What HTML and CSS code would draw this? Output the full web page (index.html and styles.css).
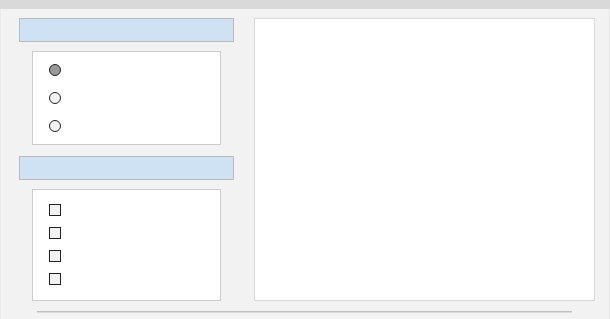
FILE: index.html
```html
<!DOCTYPE html>
<html lang="en">
<head>
  <meta charset="UTF-8" />
  <meta name="viewport" content="width=device-width, initial-scale=1.0"/>
  <title>Options</title>
  <link rel="stylesheet" href="styles.css">
</head>
<body>
  <div class="topbar"></div>
  <div class="main">
    <div class="sidebar">
      <div class="section-head"></div>
      <div class="panel radio-panel">
        <span class="radio checked"></span>
        <span class="radio"></span>
        <span class="radio"></span>
      </div>
      <div class="section-head second"></div>
      <div class="panel check-panel">
        <span class="check"></span>
        <span class="check"></span>
        <span class="check"></span>
        <span class="check"></span>
      </div>
    </div>
    <div class="content"></div>
  </div>
  <div class="divider"></div>
</body>
</html>
```

FILE: styles.css
```css
body {
  margin: 0;
  background-color: #f2f2f2;
  font-family: "Liberation Sans", Arial, sans-serif;
  height: 319px;
  overflow: hidden;
  box-shadow: inset 1px 0 0 #e9e9e9, inset -1px 0 0 #e6e6e6;
}

.topbar {
  height: 9px;
  background-color: #d9d9d9;
}

.main {
  display: flex;
  gap: 20px;
  padding: 9px 0 0 19px;
}

.sidebar {
  width: 215px;
  display: flex;
  flex-direction: column;
}

.section-head {
  height: 24px;
  box-sizing: border-box;
  background-color: #cfe2f3;
  border: 1px solid #bbbbbb;
}

.section-head.second {
  margin-top: 11px;
}

.panel {
  margin: 9px 0 0 13px;
  width: 189px;
  box-sizing: border-box;
  background-color: #ffffff;
  border: 1px solid #cccccc;
  display: flex;
  flex-direction: column;
  padding-left: 16px;
}

.radio-panel {
  height: 94px;
  padding-top: 12px;
  gap: 16px;
}

.check-panel {
  height: 112px;
  padding-top: 14px;
  gap: 11px;
}

.radio,
.check {
  display: block;
  width: 12px;
  height: 12px;
  box-sizing: border-box;
  border: 1px solid #222222;
  background-color: #f2f2f2;
}

.radio {
  border-radius: 50%;
}

.radio.checked {
  background-color: #999999;
}

.check {
  border-width: 1.5px;
}

.content {
  width: 341px;
  height: 283px;
  box-sizing: border-box;
  background-color: #ffffff;
  border: 1px solid #d9d9d9;
}

.divider {
  margin: 10px 0 0 37px;
  width: 535px;
  height: 2px;
  border-top: 1px solid #bfbfbf;
  background-color: #dadada;
  height: 1px;
}
```
